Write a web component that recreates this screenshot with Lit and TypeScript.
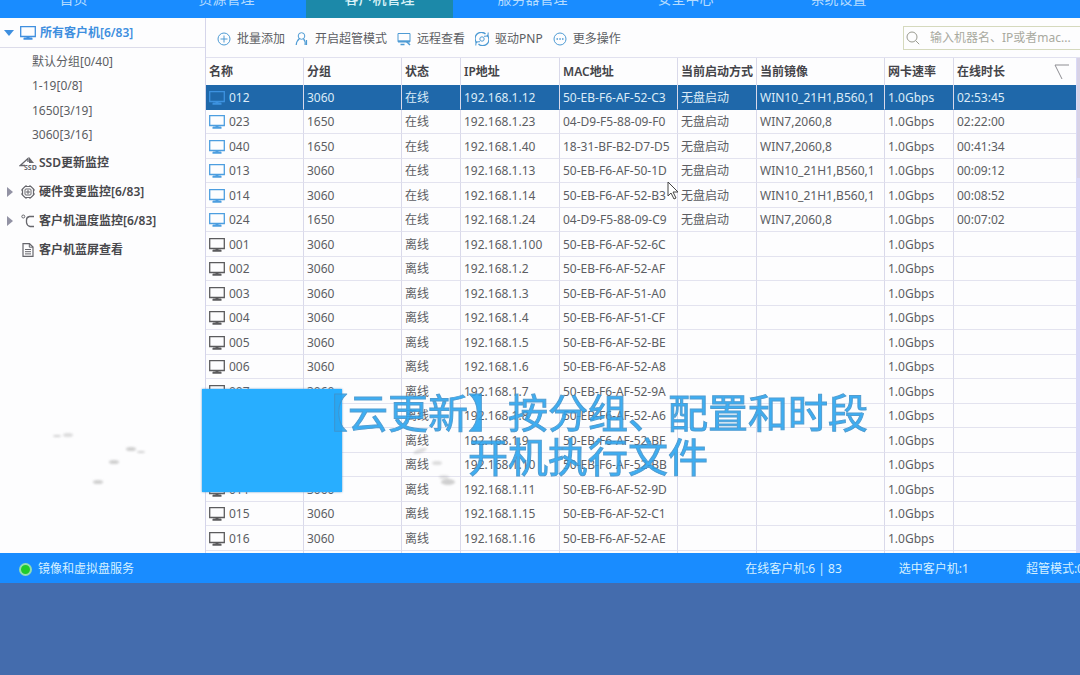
import { LitElement, html, css, svg } from "lit";
import { customElement, state } from "lit/decorators.js";
import { classMap } from "lit/directives/class-map.js";

interface Client {
  name: string;
  group: string;
  ip: string;
  mac: string;
  image?: string;
  time?: string;
}

const clients: Client[] = [
  { name: "012", group: "3060", ip: "192.168.1.12", mac: "50-EB-F6-AF-52-C3", image: "WIN10_21H1,B560,1", time: "02:53:45" },
  { name: "023", group: "1650", ip: "192.168.1.23", mac: "04-D9-F5-88-09-F0", image: "WIN7,2060,8", time: "02:22:00" },
  { name: "040", group: "1650", ip: "192.168.1.40", mac: "18-31-BF-B2-D7-D5", image: "WIN7,2060,8", time: "00:41:34" },
  { name: "013", group: "3060", ip: "192.168.1.13", mac: "50-EB-F6-AF-50-1D", image: "WIN10_21H1,B560,1", time: "00:09:12" },
  { name: "014", group: "3060", ip: "192.168.1.14", mac: "50-EB-F6-AF-52-B3", image: "WIN10_21H1,B560,1", time: "00:08:52" },
  { name: "024", group: "1650", ip: "192.168.1.24", mac: "04-D9-F5-88-09-C9", image: "WIN7,2060,8", time: "00:07:02" },
  { name: "001", group: "3060", ip: "192.168.1.100", mac: "50-EB-F6-AF-52-6C" },
  { name: "002", group: "3060", ip: "192.168.1.2", mac: "50-EB-F6-AF-52-AF" },
  { name: "003", group: "3060", ip: "192.168.1.3", mac: "50-EB-F6-AF-51-A0" },
  { name: "004", group: "3060", ip: "192.168.1.4", mac: "50-EB-F6-AF-51-CF" },
  { name: "005", group: "3060", ip: "192.168.1.5", mac: "50-EB-F6-AF-52-BE" },
  { name: "006", group: "3060", ip: "192.168.1.6", mac: "50-EB-F6-AF-52-A8" },
  { name: "007", group: "3060", ip: "192.168.1.7", mac: "50-EB-F6-AF-52-9A" },
  { name: "008", group: "3060", ip: "192.168.1.8", mac: "50-EB-F6-AF-52-A6" },
  { name: "009", group: "3060", ip: "192.168.1.9", mac: "50-EB-F6-AF-52-BF" },
  { name: "010", group: "3060", ip: "192.168.1.10", mac: "50-EB-F6-AF-52-BB" },
  { name: "011", group: "3060", ip: "192.168.1.11", mac: "50-EB-F6-AF-52-9D" },
  { name: "015", group: "3060", ip: "192.168.1.15", mac: "50-EB-F6-AF-52-C1" },
  { name: "016", group: "3060", ip: "192.168.1.16", mac: "50-EB-F6-AF-52-AE" },
];

const tabs = ["首页", "资源管理", "客户机管理", "服务器管理", "安全中心", "系统设置"];
const groups = ["默认分组[0/40]", "1-19[0/8]", "1650[3/19]", "3060[3/16]"];
const headings = ["名称", "分组", "状态", "IP地址", "MAC地址", "当前启动方式", "当前镜像", "网卡速率", "在线时长"];

const icon = (w: number, h: number, body: unknown) =>
  html`<svg width=${w} height=${h} viewBox="0 0 ${w} ${h}" fill="none" stroke="currentColor" aria-hidden="true">${body}</svg>`;

const monitor = icon(16, 16, svg`<path d="M.7 1.700h14.600v9.800H.7z" stroke-width="1.300"/><path d="M6.500 11.500h3V13h-3zM3.500 13l1-.6h7l1 .6v1.700h-9z" fill="currentColor" stroke="none"/>`);
const plus = icon(14, 14, svg`<circle cx="7" cy="7" r="6"/><path d="M7 3.500v7M3.500 7h7"/>`);
const person = icon(14, 14, svg`<circle cx="6.500" cy="4" r="3.300"/><path d="M4.500 6.500C2.500 8 1.500 10 1.200 13M8.500 7c1.600 1.300 1.800 3.500 1.600 6M11.500 8v5" stroke-width="1.200"/>`);
const remote = icon(14, 14, svg`<path d="M1 1.500h12v8.300H1z"/><path d="M1 9.300h12" stroke-width="2"/><path d="M3.500 12.500h4M9.500 9.500l3.500 3.500" stroke-width="1.500"/>`);
const driver = icon(14, 14, svg`<circle cx="7" cy="7" r="2.200"/><path d="M2 11A6 6 0 0 1 10.500 2M12 3A6 6 0 0 1 3.500 12" stroke-width="1.300"/><path d="M9 4.300l4-.300.200-3.500M5 9.700l-4 .300-.2 3.500"/>`);
const more = icon(14, 14, svg`<circle cx="7" cy="7" r="6"/><path d="M3.500 7h1.500M6.300 7h1.500M9 7h1.500" stroke-width="1.500"/>`);
const magnifier = icon(14, 14, svg`<circle cx="6" cy="6" r="5"/><path d="M9.700 9.700l3.500 3.500"/>`);
const ssd = icon(18, 14, svg`<path d="M6 9.500H1.200L9 2.500v3.500" stroke-width="1.300"/><path d="M10 1l5 6h-5z" fill="currentColor" stroke="none"/><text x="5" y="13.500" font-size="7" font-weight="700" fill="currentColor" stroke="none" font-family="Noto Sans">SSD</text>`);
const chip = icon(14, 14, svg`<path d="M4 1.500h6L12.500 4v6L10 12.500H4L1.500 10V4z" stroke-width="1.200"/><rect x="4" y="4" width="6" height="6" rx="1"/><path d="M6 6h2v2H6zM5 0v2M9 0v2M5 12v2M9 12v2M0 5h2M0 9h2M12 5h2M12 9h2"/>`);
const celsius = icon(14, 14, svg`<circle cx="2.300" cy="2.500" r="1.500"/><path d="M13 2.500H8.500Q5.500 3 5.500 6v2.500Q6 12 9 12.500h4" stroke-width="1.300"/>`);
const doc = icon(14, 14, svg`<path d="M2 .7h6.500L12 4v9.300H2z" stroke-width="1.200"/><path d="M8.300.7v3.500H12M4 6.500h6M4 8.700h6M4 10.900h6"/>`);

const tools: [unknown, string][] = [
  [plus, "批量添加"],
  [person, "开启超管模式"],
  [remote, "远程查看"],
  [driver, "驱动PNP"],
  [more, "更多操作"],
];

const sections = [
  { icon: ssd, label: "SSD更新监控", arrow: false },
  { icon: chip, label: "硬件变更监控[6/83]", arrow: true },
  { icon: celsius, label: "客户机温度监控[6/83]", arrow: true },
  { icon: doc, label: "客户机蓝屏查看", arrow: false },
];

@customElement("app-root")
export class AppRoot extends LitElement {
  @state() private selected = "012";
  @state() private tab = "客户机管理";

  static styles = css`
    :host {
      display: block;
      position: relative;
      min-height: 100vh;
      overflow: hidden;
      background: #446cad;
      color: #5c5d63;
      font: 12px/16px "Noto Sans", "Noto Sans CJK SC", sans-serif;
    }
    * { box-sizing: border-box; }
    svg { display: block; flex: none; }
    button {
      border: 0;
      padding: 0;
      margin: 0;
      background: none;
      color: inherit;
      font: inherit;
      text-align: left;
      white-space: nowrap;
    }
    .tabs {
      display: flex;
      align-items: flex-end;
      gap: 6px;
      height: 18px;
      overflow: hidden;
      background: #198cff;
    }
    .tab {
      flex: none;
      width: 147px;
      height: 38px;
      text-align: center;
      font-size: 14px;
      color: #b5dcff;
    }
    .tab.active { background: #1c89a9; color: #d8f2f8; font-weight: 500; }
    .work { display: flex; background: #fdfdfe; }
    .side { flex: none; width: 206px; border-right: 1px solid #d5d5ea; }
    .root {
      display: flex;
      align-items: center;
      gap: 4px;
      width: 100%;
      height: 30px;
      padding-left: 4px;
      border-bottom: 1px solid #dcdcea;
      color: #3f8fdf;
      font-weight: 600;
    }
    .down { border: 5px solid transparent; border-top: 6px solid #3f8fdf; border-bottom: 0; margin-right: 2px; }
    .groups { list-style: none; margin: 0; padding: 2px 0 0; }
    .group { display: block; height: 24px; padding-left: 32px; }
    .groups li:nth-child(even) { padding-bottom: 1px; }
    .section {
      display: flex;
      align-items: center;
      width: 100%;
      height: 29px;
      padding-left: 7px;
      font-weight: 600;
      color: #48484c;
    }
    .right { width: 12px; }
    .right.shown::before {
      content: "";
      display: block;
      width: 0;
      border: 5px solid transparent;
      border-left: 6px solid #9292a4;
      border-right: 0;
    }
    .glyph { width: 18px; margin-right: 2px; display: flex; justify-content: center; color: #66666c; }
    .main { flex: 1; min-width: 0; overflow: hidden; }
    .bar { display: flex; align-items: center; height: 39px; padding-left: 11px; }
    .tool { display: flex; align-items: center; gap: 6px; height: 38px; padding-top: 2px; margin-right: 10px; }
    .tool svg { color: #4e9bd4; }
    .search {
      display: flex;
      align-items: center;
      gap: 10px;
      flex: none;
      width: 180px;
      height: 24px;
      margin: 0 -3px 0 auto;
      padding-left: 2px;
      border: 1px solid #d5d9bd;
      color: #999a90;
    }
    .search input {
      width: 145px;
      border: 0;
      padding: 0;
      outline: 0;
      background: none;
      font: inherit;
      text-overflow: ellipsis;
    }
    .search input::placeholder { color: #a9aaa0; }
    .grid { display: flex; border-top: 1px solid #e1e1ef; }
    .track { flex: none; width: 4px; background: #dadaf8; }
    .thumb { height: 120px; margin-left: 1px; background: #d8d2e6; }
    table { flex: 1; width: 100%; table-layout: fixed; border-collapse: separate; border-spacing: 0; }
    th, td {
      padding: 0 0 0 3px;
      text-align: left;
      white-space: nowrap;
      border-right: 1px solid #d9d9ea;
      border-bottom: 1px solid #e3e3ef;
    }
    th:last-child, td:last-child { border-right: 0; }
    th { height: 27px; padding-top: 1px; font-weight: 600; color: #444449; border-bottom: 0; }
    td { height: 25px; padding-top: 1px; }
    tr:nth-child(even) td { height: 24px; }
    tr.tail td { height: 2px; padding: 0; border-bottom: 0; }
    .c0 { width: 98px; }
    .c1 { width: 98px; }
    .c2 { width: 59px; }
    .c3 { width: 99px; }
    .c4 { width: 118px; }
    .c5 { width: 79px; }
    .c6 { width: 128px; }
    .c7 { width: 69px; }
    .name { display: flex; align-items: center; gap: 4px; color: inherit; }
    .name svg { color: #5b5b5d; }
    .online .name svg { color: #4c9ee0; }
    .picked td { background: #1f68aa; color: #dcecf8; border-bottom-color: #1f68aa; }
    .picked .name svg { color: #3d92e0; }
    .last { display: flex; justify-content: space-between; padding-right: 6px; }
    .last svg { color: #8d8d92; }
    .status {
      display: flex;
      align-items: center;
      height: 30px;
      padding: 2px 0 0 19px;
      overflow: hidden;
      white-space: nowrap;
      background: #198cff;
      color: #d5f0ff;
    }
    .led { width: 13px; height: 13px; margin-right: 6px; border: 2px solid #93dfb0; border-radius: 50%; background: #20cc2b; }
    .counts { display: flex; gap: 57px; margin-left: auto; margin-right: -4px; }
    .cover { position: absolute; left: 202px; top: 389px; width: 140px; height: 103px; background: #28aeff; box-shadow: 0 0 2px #5f9ccd; }
    .caption {
      position: absolute;
      left: 308px;
      top: 389px;
      margin: 0;
      width: 560px;
      text-align: center;
      white-space: nowrap;
      font: 400 40px/44px "Noto Sans CJK SC", sans-serif;
      color: #28a6f2;
      -webkit-text-stroke: 1px #3f93cd;
      opacity: 0.9;
      pointer-events: none;
    }
    .cursor { position: absolute; left: 667px; top: 181px; }
    .specks { position: absolute; left: 40px; top: 425px; pointer-events: none; filter: blur(1px); }
  `;

  private row(c: Client) {
    const online = !!c.time;
    return html`<tr
      class=${classMap({ online, picked: c.name === this.selected })}
      @click=${() => (this.selected = c.name)}
    >
      <td><span class="name">${monitor}${c.name}</span></td>
      <td>${c.group}</td>
      <td>${online ? "在线" : "离线"}</td>
      <td>${c.ip}</td>
      <td>${c.mac}</td>
      <td>${online ? "无盘启动" : ""}</td>
      <td>${c.image ?? ""}</td>
      <td>1.0Gbps</td>
      <td>${c.time ?? ""}</td>
    </tr>`;
  }

  render() {
    return html`
      <nav class="tabs">
        ${tabs.map((t) => html`<button class=${classMap({ tab: true, active: t === this.tab })} @click=${() => (this.tab = t)}>${t}</button>`)}
      </nav>
      <div class="work">
        <aside class="side">
          <button class="root"><span class="down"></span>${monitor}所有客户机[6/83]</button>
          <ul class="groups">
            ${groups.map((g) => html`<li><button class="group">${g}</button></li>`)}
          </ul>
          ${sections.map(
            (s) => html`<button class="section">
              <span class=${classMap({ right: true, shown: s.arrow })}></span><span class="glyph">${s.icon}</span>${s.label}
            </button>`
          )}
        </aside>
        <main class="main">
          <div class="bar">
            ${tools.map(([i, label]) => html`<button class="tool">${i}${label}</button>`)}
            <label class="search">${magnifier}<input type="text" aria-label="搜索" placeholder="输入机器名、IP或者mac..." /></label>
          </div>
          <div class="grid">
            <table>
              <colgroup>${headings.map((_, i) => html`<col class="c${i}" />`)}</colgroup>
              <thead>
                <tr>
                  ${headings.map((h, i) =>
                    i === 8
                      ? html`<th><span class="last">${h}${icon(16, 16, svg`<path d="M15 1H1l7 14"/>`)}</span></th>`
                      : html`<th>${h}</th>`
                  )}
                </tr>
              </thead>
              <tbody>
                ${clients.map((c) => this.row(c))}
                <tr class="tail">${headings.map(() => html`<td></td>`)}</tr>
              </tbody>
            </table>
            <div class="track"><div class="thumb"></div></div>
          </div>
        </main>
      </div>
      <footer class="status">
        <span class="led"></span>镜像和虚拟盘服务
        <div class="counts"><span>在线客户机:6 | 83</span><span>选中客户机:1</span><span>超管模式:0</span></div>
      </footer>
      <svg class="specks" width="430" height="66" viewBox="0 0 430 66" aria-hidden="true">
        <g fill="#aaa" opacity=".55">
          <ellipse cx="28" cy="10" rx="5" ry="2" opacity=".7"/><ellipse cx="17" cy="11" rx="4" ry="1"/>
          <ellipse cx="91" cy="24" rx="5" ry="2"/><ellipse cx="74" cy="37" rx="5" ry="2"/>
          <ellipse cx="58" cy="57" rx="5" ry="2"/><ellipse cx="101" cy="27" rx="4" ry="1"/>
          <ellipse cx="380" cy="26" rx="7" ry="2" transform="rotate(-20 380 26)" opacity=".7"/><ellipse cx="397" cy="38" rx="5" ry="2" opacity=".7"/>
          <ellipse cx="404" cy="52" rx="5" ry="2" opacity=".6"/><ellipse cx="408" cy="57" rx="7" ry="3"/>
        </g>
      </svg>
      <svg class="cursor" width="12" height="20" viewBox="0 0 12 20" fill="#fff" stroke="#444" aria-hidden="true">
        <path d="M1 1v14l3-3 3 6 2-1-3-6h5z"/>
      </svg>
      <div class="cover"></div>
      <p class="caption">【云更新】按分组、配置和时段<br />开机执行文件</p>
    `;
  }
}
